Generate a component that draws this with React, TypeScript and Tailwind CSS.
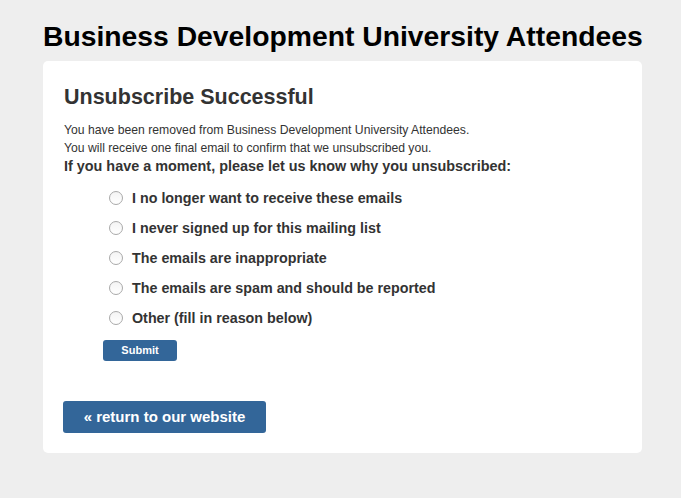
import React from "react";

const reasons = [
  "I no longer want to receive these emails",
  "I never signed up for this mailing list",
  "The emails are inappropriate",
  "The emails are spam and should be reported",
  "Other (fill in reason below)",
];

export default function App() {
  return (
    <div className="min-h-[498px] w-full bg-[#eeeeee] font-['Liberation_Sans',Arial,sans-serif] text-[#333333]">
      <div className="ml-[43px] w-[599px] pt-[18px]">
        <h1 className="whitespace-nowrap text-center text-[28.3px] font-bold leading-[36px] text-black">Business Development University Attendees</h1>
        <div className="mt-[7px] rounded-[5px] bg-white pl-[21px] pr-[20px] pt-[22px] pb-[20px]">
          <h2 className="text-[21.5px] font-bold leading-[28px] text-[#333333]">Unsubscribe Successful</h2>
          <p className="mt-[10px] text-[12.2px] leading-[18px]">
            You have been removed from Business Development University Attendees.
            <br />
            You will receive one final email to confirm that we unsubscribed you.
          </p>
          <p className="whitespace-nowrap text-[14.4px] font-bold leading-[18px]">If you have a moment, please let us know why you unsubscribed:</p>
          <div className="mt-[8px] flex flex-col pl-[39px]">
            {reasons.map((r) => (
              <label key={r} className="flex h-[30px] items-center gap-[9px] pl-[6px] text-[14.3px] font-bold">
                <span className="inline-block h-[14px] w-[14px] rounded-full border border-[#a9a9a9] bg-gradient-to-b from-[#f4f4f4] to-white" />
                <span className="pt-[2px]">{r}</span>
              </label>
            ))}
            <div className="mt-[4px]">
              <button className="h-[21px] w-[74px] rounded-[3px] bg-[#336699] text-[11px] font-bold text-white">Submit</button>
            </div>
          </div>
          <button className="-ml-[1px] mt-[40px] h-[32px] w-[203px] rounded-[3px] bg-[#336699] text-[15px] font-bold text-white">« return to our website</button>
        </div>
      </div>
    </div>
  );
}
